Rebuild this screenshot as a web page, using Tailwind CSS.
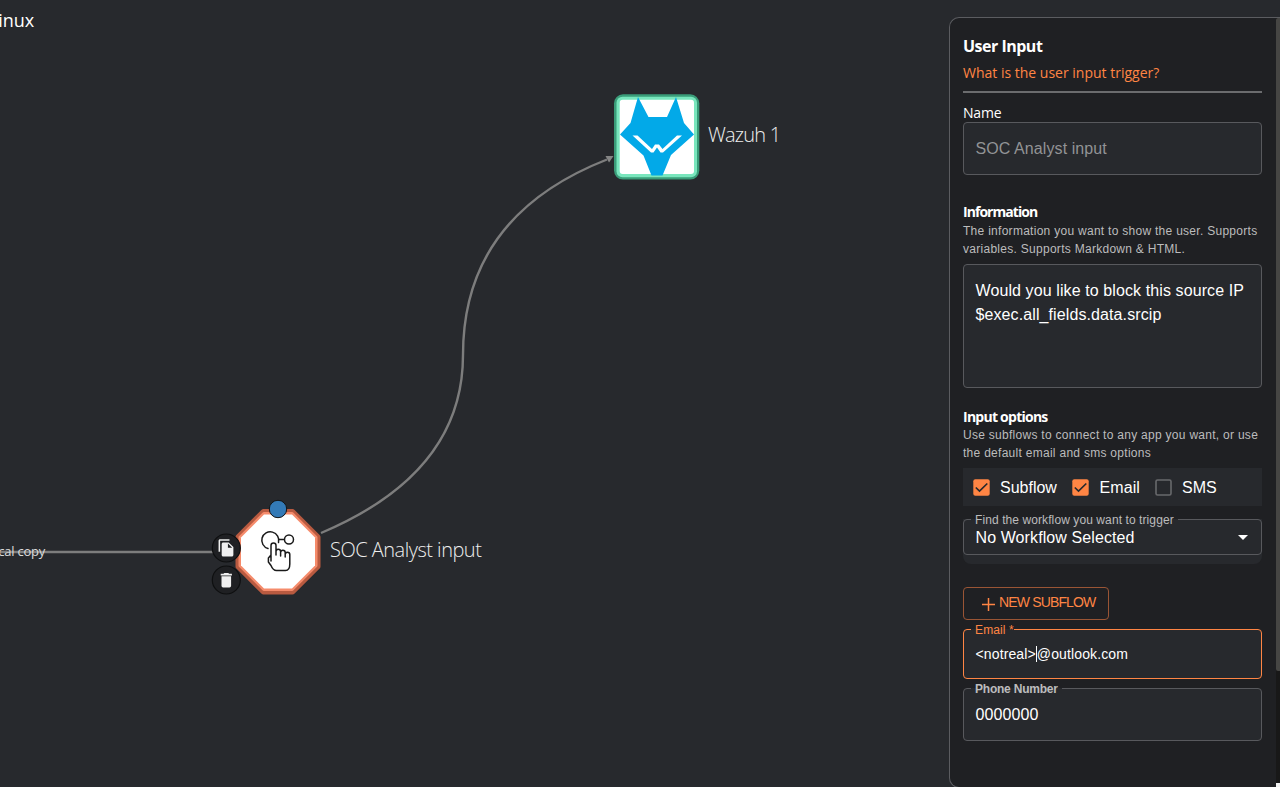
<!DOCTYPE html>
<html lang="en">
<head>
<meta charset="utf-8">
<title>Workflow editor</title>
<script src="https://cdn.jsdelivr.net/npm/@tailwindcss/browser@4"></script>
</head>
<body class="h-[787px] w-[1280px] overflow-hidden bg-[#27292d] font-['Liberation_Sans',sans-serif] text-white">
<div class="relative flex h-[787px] w-[1280px] justify-end overflow-hidden">

  <!-- Workflow canvas -->
  <main class="absolute inset-0">
    <svg class="absolute inset-0" width="949" height="787" viewBox="0 0 949 787" fill="none">
      <path d="M0 552H214" stroke="#7d7d7d" stroke-width="2.4"/>
      <path d="M321 533Q463 473 463 355Q463 216 607 159.500" stroke="#7d7d7d" stroke-width="2.4"/>
      <path d="M613.500 156L605.500 156L609 162.500Z" fill="#858585"/>
    </svg>
    <h1 class="absolute right-[1246px] top-[8px] whitespace-nowrap font-['Open_Sans',sans-serif] text-[18px] font-medium leading-6 tracking-[-0.1px]">Linux</h1>
    <span class="absolute right-[1235px] top-[542px] whitespace-nowrap font-['Open_Sans',sans-serif] text-[13px] leading-[18px] tracking-[-0.25px] text-[#dcdcdc]">local copy</span>

    <svg class="absolute left-[612px] top-[92px]" width="90" height="90" viewBox="612 92 90 90">
      <rect x="614" y="94.300" width="85.300" height="85.300" rx="9" fill="#3a9c79"/>
      <rect x="616.500" y="96.700" width="80.500" height="80.500" rx="6" fill="#79e6bd"/>
      <rect x="619.700" y="99.700" width="74.300" height="74.300" rx="3" fill="#fff"/>
      <path d="M638 97L648.500 117H667L676 97L684 123L694 134.500L671 155L662.500 175.500H651.500L643.500 155.500L620 134.500L630.500 123Z" fill="#02a9e8"/>
      <path d="M632.500 135.500H637.500L652 149L655 144.500H659L662.500 149L677 135.500H682L663 152.500H660.500L657 147.500L653.500 152.500H651Z" fill="#fff"/>
    </svg>
    <span class="absolute left-[708px] top-[122px] whitespace-nowrap font-['Open_Sans',sans-serif] text-[20px] font-light leading-[26px] tracking-[-0.8px] text-[#eee]">Wazuh 1</span>

    <svg class="absolute left-[208px] top-[496px]" width="116" height="102" viewBox="208 496 116 102" fill="none">
      <path d="M263.500 512H292.500L317.500 537V566.500L292.500 591.500H263.500L238.500 566.500V537Z" fill="#b85a40" stroke="#b85a40" stroke-width="6" stroke-linejoin="round"/>
      <path d="M263.800 513.500H292.200L316 537.300V565.700L292.200 589.500H263.800L240 565.700V537.300Z" fill="#f58b6b" stroke="#f58b6b" stroke-width="3" stroke-linejoin="round"/>
      <path d="M264 514.500H292L315 537.500V565.500L292 588.500H264L241 565.500V537.500Z" fill="#fff"/>
      <g stroke="#1a1a1a" stroke-width="1.500" stroke-linecap="round" stroke-linejoin="round">
        <path d="M268 548.500A8.500 8.500 0 1 1 278.500 542.500"/>
        <path d="M279 539.500H284"/><circle cx="289" cy="539.500" r="4.500"/>
        <path d="M271 561V545.500a2.500 2.500 0 0 1 5 0V555V551.500a2.300 2.300 0 0 1 4.600 0V556V552.500a2.300 2.300 0 0 1 4.600 0V557V554.500a2.300 2.300 0 0 1 4.600 0V564C289.800 568 288 570.500 285.500 570.500H276.500C273.500 570.500 272 568 271 565.500L268.400 562V558L271 555"/>
      </g>
      <circle cx="278" cy="509" r="8.700" fill="#337ab7" stroke="#121314"/>
      <circle cx="226.300" cy="548" r="14" fill="#1f2023" stroke="#0e0f10" stroke-width="1.200"/>
      <circle cx="226.300" cy="580" r="14" fill="#1f2023" stroke="#0e0f10" stroke-width="1.200"/>
      <path transform="translate(217 538.500) scale(.78)" d="M16 1H4c-1.100 0-2 .9-2 2v14h2V3h12V1zm-1 4 6 6v10c0 1.100-.9 2-2 2H7.990C6.890 23 6 22.100 6 21l.010-14c0-1.100.890-2 1.990-2h7zm-1 7h5.500L14 6.500V12z" fill="#f0f0f0"/>
      <path transform="translate(216.700 570.600) scale(.8)" d="M6 19c0 1.100.9 2 2 2h8c1.100 0 2-.9 2-2V7H6v12zM19 4h-3.500l-1-1h-5l-1 1H5v2h14V4z" fill="#f0f0f0"/>
    </svg>
    <span class="absolute left-[330px] top-[537px] whitespace-nowrap font-['Open_Sans',sans-serif] text-[20px] font-light leading-[26px] tracking-[-0.5px] text-[#eee]">SOC Analyst input</span>
  </main>

  <!-- Node settings -->
  <aside class="relative mt-[17px] flex h-[771px] w-[331px] shrink-0 flex-col rounded-l-[10px] border border-r-0 border-[#5b5c60] bg-[#1f2023] pl-[13px]">
    <div class="flex w-[299px] flex-col">
      <h2 class="mt-4 h-6 whitespace-nowrap font-['Open_Sans',sans-serif] text-base font-bold leading-6 tracking-[-0.5px]">User Input</h2>
      <a class="mt-1 h-5 whitespace-nowrap font-['Open_Sans',sans-serif] text-sm leading-[21px] text-[#ff8544]">What is the user input trigger?</a>
      <hr class="mt-[9px] h-[2px] border-0 bg-[#6b6c6e]">
      <label class="mt-[9px] h-5 whitespace-nowrap font-['Open_Sans',sans-serif] text-sm leading-[21px] tracking-[-0.2px]">Name</label>
      <div class="flex h-[53px] items-center rounded-[4px] border border-[#58595d] bg-[#27292d] pl-[11.5px] text-base tracking-[0.09px] text-[#929395]">SOC Analyst input</div>

      <h3 class="mt-[27px] h-5 whitespace-nowrap font-['Open_Sans',sans-serif] text-sm font-bold leading-5 tracking-[-0.95px]">Information</h3>
      <p class="whitespace-nowrap text-xs leading-[18px] tracking-[0.28px] text-[#bcbcbd]">The information you want to show the user. Supports<br>variables. Supports Markdown &amp; HTML.</p>
      <div class="mt-[6px] h-[124px] whitespace-nowrap rounded-[4px] border border-[#58595d] bg-[#27292d] pl-[11.5px] pt-[14px] text-base leading-6 tracking-[0.1px]">Would you like to block this source IP<br>$exec.all_fields.data.srcip</div>

      <h3 class="mt-[18px] h-5 whitespace-nowrap font-['Open_Sans',sans-serif] text-sm font-bold leading-[21px] tracking-[-0.75px]">Input options</h3>
      <p class="whitespace-nowrap text-xs leading-[18px] tracking-[0.28px] text-[#bcbcbd]">Use subflows to connect to any app you want, or use<br>the default email and sms options</p>

      <div class="mt-[6px] flex h-[38px] items-center bg-[#27292d] pl-[9.500px] text-base">
        <svg class="h-[17px] w-[17px]" viewBox="0 0 17 17"><rect x=".3" y=".3" width="16.400" height="16.400" rx="2" fill="#ff8544"/><path d="M2.800 8.500L6.500 12L14.300 4.500" fill="none" stroke="#27292d" stroke-width="1.700"/></svg>
        <span class="relative top-px ml-[10.500px] w-[63px]">Subflow</span>
        <svg class="ml-[9px] h-[17px] w-[17px]" viewBox="0 0 17 17"><rect x=".3" y=".3" width="16.400" height="16.400" rx="2" fill="#ff8544"/><path d="M2.800 8.500L6.500 12L14.300 4.500" fill="none" stroke="#27292d" stroke-width="1.700"/></svg>
        <span class="relative top-px ml-[10.500px] w-[46px] tracking-[0.1px]">Email</span>
        <svg class="ml-[9px] h-[17px] w-[17px]" viewBox="0 0 17 17"><rect x="1" y="1" width="15" height="15" rx="1.500" fill="none" stroke="#68696c" stroke-width="1.600"/></svg>
        <span class="relative top-px ml-[10.500px]">SMS</span>
      </div>

      <div class="relative mt-[13px] h-[45px] rounded-b-[8px] bg-[#27292d]">
        <div class="flex h-9 items-center justify-between rounded-[4px] border border-[#58595d] pl-[11.5px] pr-[13px] text-base">
          <span class="pt-[2px] tracking-[0.1px]">No Workflow Selected</span>
          <svg width="10" height="5" viewBox="0 0 10 5"><path d="M0 0H10L5 5Z" fill="#fff"/></svg>
        </div>
        <span class="absolute left-2 top-[-6px] h-[14px] whitespace-nowrap bg-linear-to-b from-[#1f2023] from-45% to-[#27292d] to-45% px-1 text-xs leading-[15px] tracking-[0.09px] text-[#bcbcbd]">Find the workflow you want to trigger</span>
      </div>

      <button class="mt-[23px] flex h-[33px] w-[146px] items-center rounded-[4px] border border-[#9a5535] pl-[18px] text-sm text-[#ff8544]">
        <svg class="mt-[1px]" width="13" height="13" viewBox="0 0 13 13"><path d="M6.500 0V13M0 6.500H13" stroke="#ff8544" stroke-width="1.500"/></svg>
        <span class="mb-[3px] ml-1 whitespace-nowrap text-[14px] tracking-[-0.85px]">NEW SUBFLOW</span>
      </button>

      <div class="relative mt-[9px] flex h-[50px] items-center rounded-[4px] border border-[#ff8544] bg-[#27292d] pl-[11.5px] text-sm tracking-[0.13px]">
        <span>&lt;notreal&gt;</span><i class="h-4 w-px bg-white"></i><span>@outlook.com</span>
        <span class="absolute left-[7px] top-[-7px] h-[14px] whitespace-nowrap bg-linear-to-b from-[#1f2023] from-45% to-[#27292d] to-45% pl-1 text-xs leading-[15px] text-[#ff8544]">Email *</span>
      </div>

      <div class="relative mt-[9px] flex h-[53px] items-center rounded-[4px] border border-[#58595d] bg-[#27292d] pl-[11.5px] text-base tracking-[0.1px]">
        <span>0000000</span>
        <span class="absolute left-[7px] top-[-7px] h-[14px] whitespace-nowrap bg-linear-to-b from-[#1f2023] from-45% to-[#27292d] to-45% px-1 text-xs font-bold leading-[15px] tracking-[-0.22px] text-[#bcbcbd]">Phone Number</span>
      </div>
    </div>

    <!-- Scrollbar -->
    <div class="absolute right-0 top-0 flex h-[770px] w-1 flex-col bg-[#181818]">
      <div class="h-[653px] rounded-l-[2px] bg-[#464644]"></div>
      <div class="mt-[112px] h-[5px] bg-[#f1f1f1]"></div>
    </div>
  </aside>
</div>
</body>
</html>
